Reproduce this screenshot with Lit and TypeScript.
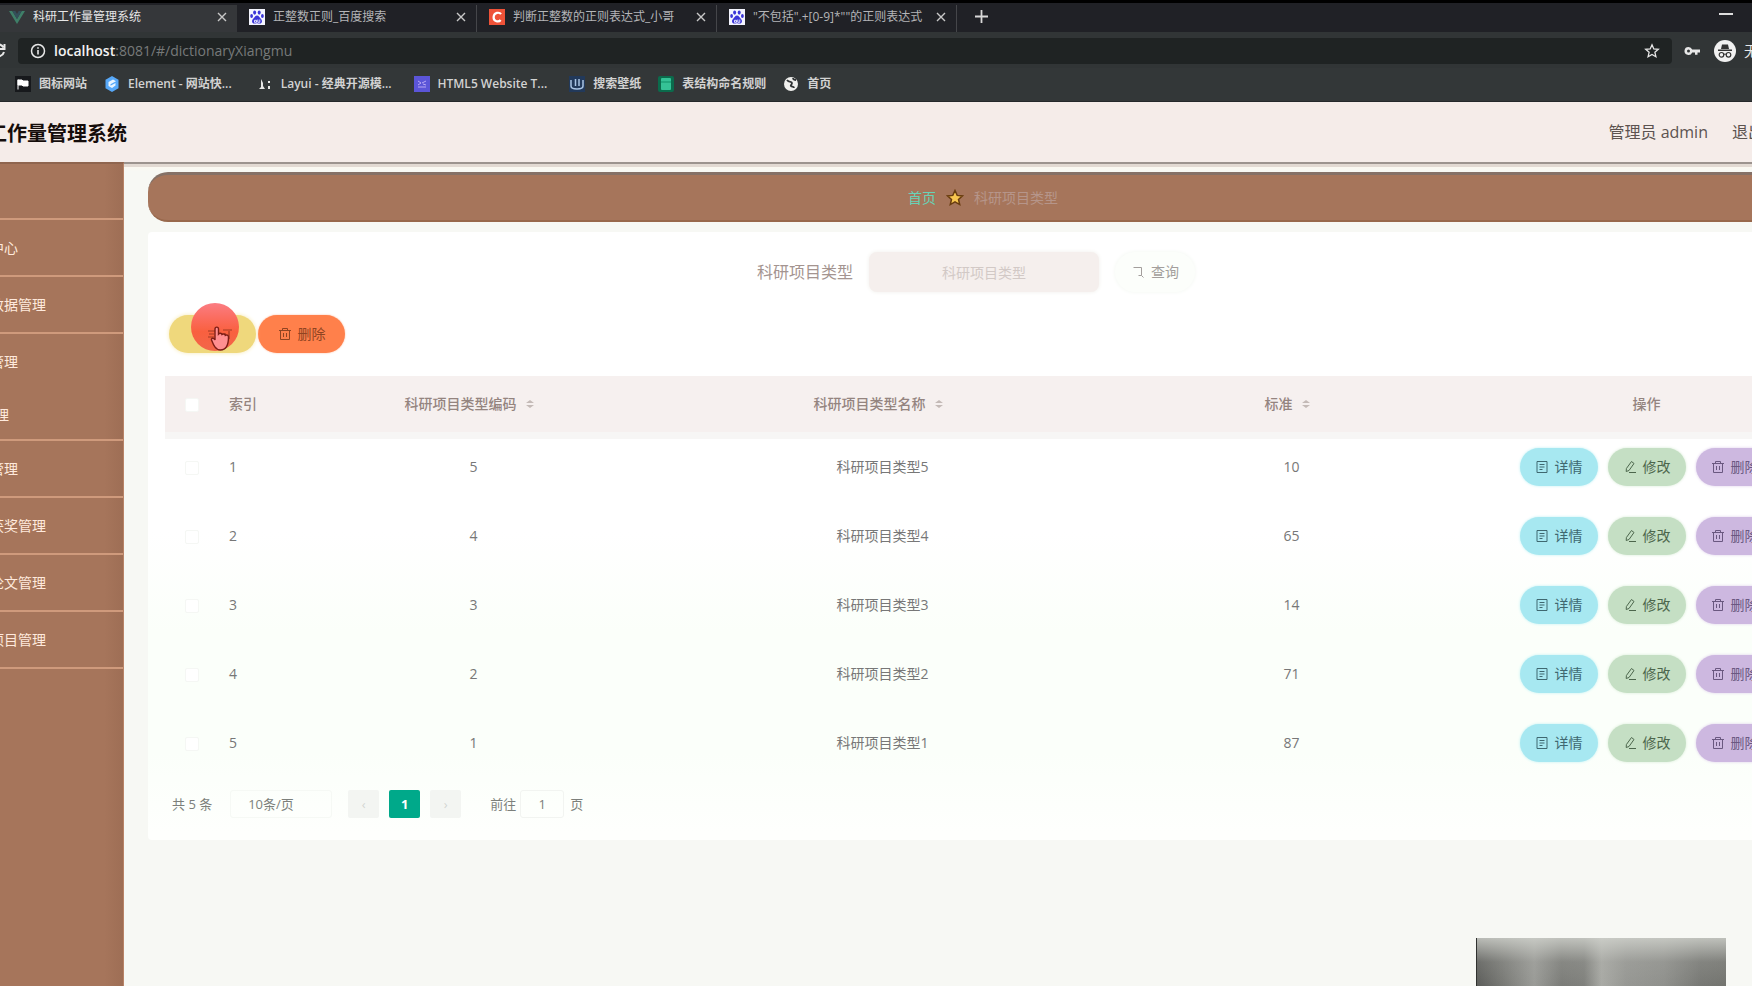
import { LitElement, html, css, svg } from "lit";
import { customElement } from "lit/decorators.js";

const baidu = svg`<svg class="fav" viewBox="0 0 16 16"><rect width="16" height="16" fill="#f4f5ff"/><g fill="#3a35d8"><ellipse cx="5.6" cy="3.6" rx="1.5" ry="2.1"/><ellipse cx="10.2" cy="3.6" rx="1.5" ry="2.1"/><ellipse cx="2.6" cy="7" rx="1.4" ry="1.9"/><ellipse cx="13.4" cy="7" rx="1.4" ry="1.9"/><path d="M8 6.6c-2 0-2.4 2-4 3.4-1.6 1.500-1.200 4.600 1.200 4.600 1.200 0 1.800-.3 2.800-.3s1.600.3 2.800.3c2.400 0 2.800-3.100 1.200-4.600C10.400 8.600 10 6.600 8 6.600z"/></g><path d="M5.500 11.300h2v2h-2zM8.800 10.500v2.800h2v-2.800" fill="none" stroke="#f4f5ff" stroke-width=".9"/></svg>`;
const vue = svg`<svg class="fav" viewBox="0 0 16 16"><path d="M0 2h3.300L8 10l4.700-8H16L8 15z" fill="#3f7f68"/><path d="M3.300 2h3L8 5l1.700-3h3L8 10z" fill="#33505a"/></svg>`;
const csdn = svg`<svg class="fav" viewBox="0 0 16 16"><rect width="16" height="16" fill="#ee5238"/><path d="M12 5.200C10.500 3 5 3 4.600 8c-.2 5 5.400 5.200 7 3" fill="none" stroke="#fff" stroke-width="2.200"/></svg>`;
const closeIcon = svg`<svg viewBox="0 0 10 10" width="10" height="10"><path d="M1 1l8 8M9 1l-8 8" stroke="currentColor" stroke-width="1.400"/></svg>`;

const TABS = [
  { title: "科研工作量管理系统", icon: vue },
  { title: "正整数正则_百度搜索", icon: baidu },
  { title: "判断正整数的正则表达式_小哥", icon: csdn },
  { title: "\"不包括\".+[0-9]*\"\"的正则表达式", icon: baidu },
];

const MARKS = [
  { cls: "", title: "图标网站", icon: svg`<svg class="fav" viewBox="0 0 16 16"><rect width="16" height="16" fill="#17191c"/><path d="M3 3.500v10M3 4h4l1 1h5v5H8L7 9H3z" fill="#fff" stroke="#fff"/></svg>` },
  { cls: "", title: "Element - 网站快...", icon: svg`<svg class="fav" viewBox="0 0 16 16"><path d="M8 0l6.500 3.800v8.400L8 16l-6.500-3.800V3.800z" fill="#57a8f8"/><path d="M4.500 6L9 3.500l3 1.700L6.500 8.300v1.500l5-2.800v2.500L8 12l-3.500-2z" fill="#e9f5ff"/></svg>` },
  { cls: "wide", title: "Layui - 经典开源模...", icon: svg`<svg class="fav" viewBox="0 0 16 16"><path d="M4 3v8l-2 2h6l-2-3V7zM11 5h2v2h-2zM11 10h2v3h-2z" fill="#e8e8e6"/></svg>` },
  { cls: "wide", title: "HTML5 Website T...", icon: svg`<svg class="fav" viewBox="0 0 16 16"><rect width="16" height="16" fill="#5b55d8"/><path d="M4 5l3 2-3 2M8 7l4-2M4 11h8M9 8l3 1" stroke="#b9a8f4" fill="none"/></svg>` },
  { cls: "wide", title: "搜索壁纸", icon: svg`<svg class="fav" viewBox="0 0 16 16"><rect width="16" height="16" fill="#22395a"/><path d="M2 4v6c0 4 12 4 12 0V4M6.500 3v7M10 3v7" stroke="#a9c4e4" stroke-width="1.500" fill="none"/></svg>` },
  { cls: "", title: "表结构命名规则", icon: svg`<svg class="fav" viewBox="0 0 16 16"><rect width="16" height="16" rx="2" fill="#0b6b4c"/><rect x="3" y="2" width="10" height="12" rx="1" fill="#35c296"/><path d="M3 6h10" stroke="#0f8f66"/></svg>` },
  { cls: "", title: "首页", icon: svg`<svg class="fav" viewBox="0 0 16 16"><circle cx="8" cy="8" r="7" fill="#f0f0ee"/><path d="M4 4c2 3 5 1 5 3s-2 2-1 3 3 0 3 2M10 2c0 2 2 2 3 2" stroke="#303335" stroke-width="1.800" fill="none"/></svg>` },
];

const MENU = [
  { text: "", cls: "" },
  { text: "中心", cls: "" },
  { text: "数据管理", cls: "" },
  { text: "管理", cls: "open" },
  { text: "管理", cls: "sub" },
  { text: "管理", cls: "" },
  { text: "获奖管理", cls: "" },
  { text: "论文管理", cls: "" },
  { text: "项目管理", cls: "" },
];

const ROWS = [
  { code: 5, std: 10 },
  { code: 4, std: 65 },
  { code: 3, std: 14 },
  { code: 2, std: 71 },
  { code: 1, std: 87 },
];

const docIcon = svg`<svg class="ico" viewBox="0 0 14 14"><path d="M2 1.500h10v11H2zM4.500 4.500h5M4.500 7h5M4.500 9.500h3" fill="none" stroke="currentColor"/></svg>`;
const editIcon = svg`<svg class="ico" viewBox="0 0 14 14"><path d="M8.500 1.500l2.500 2-5 7-2.800 1 .2-3zM6 12.500h7" fill="none" stroke="currentColor"/></svg>`;
const binIcon = svg`<svg class="ico" viewBox="0 0 14 14"><path d="M1 3.500h12M4.500 3.500v-2h5v2M2.500 3.500v9h9v-9M5.500 6v4M8.500 6v4" fill="none" stroke="currentColor"/></svg>`;
const sortIcon = svg`<svg class="sort" viewBox="0 0 10 10"><path d="M1 4l4-3 4 3zM1 6l4 3 4-3z" fill="currentColor"/></svg>`;

@customElement("app-root")
export class AppRoot extends LitElement {
  static styles = css`
    :host { display: flex; flex-direction: column; position: relative; min-height: 100vh; overflow: hidden; background: #f7f8f4; font-family: "Open Sans", "Noto Sans CJK SC", sans-serif; font-size: 14px; line-height: 20px; color: #777; }
    * { box-sizing: border-box; }
    button, input, select { font: inherit; color: inherit; border: 0; margin: 0; padding: 0; background: none; }
    button { cursor: pointer; }
    a { text-decoration: none; color: inherit; }

    .tabs { display: flex; align-items: stretch; height: 32px; padding-top: 2px; border-top: 3px solid #000; margin-left: -3px; background: #202126; font-size: 12px; color: #b4b5b8; }
    .tab { display: flex; align-items: center; gap: 8px; width: 240px; padding: 0 10px 4px 12px; }
    .tab + .tab { border-right: 1px solid #45464a; }
    .tab.active { background: #35373a; color: #e6e6e6; }
    .fav { width: 16px; height: 16px; flex: none; }
    .title { flex: 1; overflow: hidden; white-space: nowrap; }
    .close { display: flex; flex: none; color: #c8c8c8; }
    .plus { display: flex; align-items: center; padding: 0 16px 4px 18px; color: #d8d8d8; }
    .min { margin: 8px 19px 0 auto; width: 14px; height: 2px; background: #ddd; }

    .address { display: flex; align-items: center; gap: 12px; height: 36px; padding-top: 2px; background: #313536; color: #e8e8e8; }
    .reload { display: flex; margin-left: -10px; }
    .field { display: flex; align-items: center; gap: 8px; flex: 1; height: 26px; padding: 0 12px; border-radius: 4px; background: #1f2323; }
    .url { flex: 1; font-size: 14px; color: #777a7a; }
    .url b { font-weight: 600; color: #f2f2f2; }
    .who { display: flex; align-items: center; gap: 8px; margin-left: 2px; font-size: 14px; width: 38px; white-space: nowrap; }
    .guest { flex: none; width: 22px; height: 22px; }
    .marks { display: flex; align-items: center; gap: 17px; height: 34px; padding: 0 15px 2px; background: #333738; border-bottom: 1px solid #25282a; font-size: 12px; font-weight: 600; color: #d2d2d2; }
    .mark { display: flex; align-items: center; gap: 8px; white-space: nowrap; }
    .wide { margin-left: 8px; }
    .wide + .wide { margin-left: 5px; }

    .head { display: flex; align-items: center; height: 60px; padding-top: 4px; background: #f5ece9; color: #5c5350; font-size: 16px; }
    h1 { flex: 1; margin: 0 0 0 -13px; font-size: 20px; line-height: 28px; color: #150d0b; font-weight: 700; }
    .head nav { display: flex; gap: 24px; margin-right: -12px; padding-bottom: 4px; white-space: nowrap; }

    .body { display: grid; grid-template-columns: 124px minmax(0, 1fr); flex: 1; }
    .side { background: linear-gradient(90deg, #a6755b 85%, #9e6e55); border-top: 2px solid #8f654f; border-right: 1px solid #b98468; overflow: hidden; }
    .side ul { list-style: none; margin: 0; padding: 0; }
    .item { display: flex; align-items: center; height: 57px; border-bottom: 2px solid #cf9a7c; color: #ffeadd; }
    .item:first-child { height: 56px; }
    .item a { margin-left: -10px; white-space: nowrap; }
    .item.open { border-bottom-color: transparent; }
    .item.sub { height: 50px; }
    .item.sub a { margin-left: -19px; }

    main { min-width: 0; padding: 6px 0 60px 24px; border-top: 2px solid #9c938e; background: linear-gradient(#e2d9d2 3px, #faf8f1 3px, #f7f8f4 8px); }
    .crumbs { display: flex; align-items: center; justify-content: center; gap: 10px; height: 50px; margin: 2px -62px 0 0; padding-left: 4px; border-radius: 20px; border-top: 3px solid #857167; border-bottom: 2px solid #98684c; background: #a6755b; color: #b6958a; }
    .crumbs .home { color: #68d3b8; }
    .card { margin: 10px -62px 0 0; padding: 16px 17px 22px; border-radius: 4px; background: linear-gradient(#fff 300px, #fbfffa 400px, #fbfffa 520px, #fefffd 600px); }
    .search { display: flex; align-items: center; justify-content: center; gap: 16px; height: 48px; margin-right: 10px; }
    .search label { font-size: 16px; color: #a49490; }
    .search input { width: 230px; height: 40px; border-radius: 8px; background: #f5efed; box-shadow: 0 0 4px #f0efeb; text-align: center; }
    .search input::placeholder { color: #d2c9c6; }
    .btn { display: inline-flex; align-items: center; justify-content: center; gap: 6px; white-space: nowrap; }
    .find { width: 80px; height: 40px; border-radius: 20px; background: #fcfefb; box-shadow: 0 0 4px #f3f7f1; color: #a39e9c; }
    .ico { width: 14px; height: 14px; flex: none; }
    .tools { display: flex; gap: 2px; margin: 19px 0 23px 4px; }
    .tools .btn { width: 87px; height: 38px; border-radius: 19px; }
    .add { position: relative; background: #efd87c; box-shadow: 0 0 4px #f6e9b4; }
    .del { background: #ff804b; color: #8f4422; box-shadow: 0 0 2px #ffb493; }
    .touch { position: absolute; left: 22px; top: -12px; width: 48px; height: 50px; }

    table { width: 100%; border-collapse: collapse; table-layout: fixed; }
    .c0 { width: 54px; } .c1 { width: 50px; } .c5 { width: 301px; }
    th { height: 56px; padding: 0; background: #f6f0ef; color: #94847f; font-weight: 500; text-align: center; }
    td { height: 69px; padding: 0; text-align: center; }
    tbody tr:first-child td { background: linear-gradient(#f7f6f5 7px, transparent 7px); }
    .idx { text-align: left; padding-left: 10px; }
    .sort { width: 10px; height: 10px; margin: 0 8px; color: #c4bab7; }
    input[type="checkbox"] { appearance: none; width: 14px; height: 14px; border: 1px solid #f5f7f4; border-radius: 2px; background: #fff; vertical-align: middle; }
    .acts { display: flex; justify-content: center; gap: 10px; }
    .acts .btn { width: 78px; height: 38px; border-radius: 19px; }
    .acts .view { background: #a7e8f1; box-shadow: 0 0 3px #bdf0f4; color: #3f6870; }
    .acts .edit { background: #c5dfc4; box-shadow: 0 0 3px #d5ead3; color: #4c664c; }
    .acts .kill { background: #cdb8e0; box-shadow: 0 0 3px #dccbea; color: #6a5880; }

    .pager { display: flex; align-items: center; height: 28px; margin: 13px 0 0 7px; font-size: 13px; color: #7c7f7b; white-space: nowrap; }
    .pager select { appearance: none; width: 102px; height: 28px; margin: 0 16px 0 18px; padding-left: 17px; border: 1px solid #f6f9f5; border-radius: 3px; font-size: 13px; }
    .pg { display: flex; gap: 10px; margin-right: 29px; }
    .pg button { width: 31px; height: 28px; border-radius: 2px; background: #f3f5f2; color: #d3d6d3; }
    .pg .on { background: #00a98a; color: #fff; font-weight: 700; }
    .pager input { width: 44px; height: 28px; margin: 0 6px 0 4px; border: 1px solid #f2f4f1; border-radius: 3px; text-align: center; font-size: 13px; }

    .haze { position: absolute; right: 26px; bottom: 0; width: 250px; height: 48px; background: linear-gradient(rgba(210,212,206,.8), rgba(180,181,176,.2) 50%, transparent), linear-gradient(90deg, #5c5d5a, #777874 10%, #9a9b97 23%, #7b7c78 34%, #7f807c 43%, #a9aaa5 50%, #969793 60%, #8f908c 75%, #777874 90%, #73746f); border-left: 1px solid #30312f; }
  `;

  render() {
    return html`
      <div class="tabs">
        ${TABS.map((t, i) => html`<div class="tab ${i === 0 ? "active" : ""}">${t.icon}<span class="title">${t.title}</span><button class="close" aria-label="关闭">${closeIcon}</button></div>`)}
        <button class="plus" aria-label="新标签页"><svg width="13" height="13" viewBox="0 0 13 13"><path d="M6.500 0v13M0 6.500h13" stroke="currentColor" stroke-width="1.800"/></svg></button>
        <button class="min" aria-label="最小化"></button>
      </div>
      <div class="address">
        <button class="reload" aria-label="刷新"><svg width="16" height="16" viewBox="0 0 16 16"><path d="M13.500 4.500A6 6 0 1 0 14 9M14.500 1v5h-5" fill="none" stroke="currentColor" stroke-width="2"/></svg></button>
        <div class="field">
          <svg width="16" height="16" viewBox="0 0 16 16"><circle cx="8" cy="8" r="6.500" fill="none" stroke="currentColor" stroke-width="1.500"/><path d="M8 7v4.500M8 4.300v1.500" stroke="currentColor" stroke-width="1.600"/></svg>
          <span class="url"><b>localhost</b>:8081/#/dictionaryXiangmu</span>
          <svg width="16" height="16" viewBox="0 0 16 16"><path d="M8 1.800l1.800 4.100 4.500.4-3.400 3 1 4.400L8 11.400l-3.900 2.300 1-4.400-3.400-3 4.500-.4z" fill="none" stroke="currentColor" stroke-width="1.300"/></svg>
        </div>
        <svg width="16" height="16" viewBox="0 0 16 16"><path d="M4.500 4a4 4 0 1 0 3.700 5.500H11v2.300h2.500V9.500H16v-3H8.200A4 4 0 0 0 4.500 4zm0 2.500a1.500 1.500 0 1 1 0 3 1.500 1.500 0 0 1 0-3z" fill="currentColor"/></svg>
        <div class="who"><svg class="guest" viewBox="0 0 22 22"><circle cx="11" cy="11" r="11" fill="#f1f1f1"/><path d="M8 4.500h6l1 4.500H7zM4 9.500h14v1.500H4z" fill="#333"/><path d="M9.500 14.500q1.500-1 3 0" fill="none" stroke="#333"/><circle cx="7.500" cy="14.800" r="2.300" fill="none" stroke="#333" stroke-width="1.200"/><circle cx="14.500" cy="14.800" r="2.300" fill="none" stroke="#333" stroke-width="1.200"/></svg><span>无</span></div>
      </div>
      <nav class="marks">${MARKS.map((m) => html`<a class="mark ${m.cls}" href="#">${m.icon}<span>${m.title}</span></a>`)}</nav>

      <header class="head">
        <h1>工作量管理系统</h1>
        <nav><span>管理员 admin</span><a href="#">退出</a></nav>
      </header>
      <div class="body">
        <aside class="side"><ul>${MENU.map((m) => html`<li class="item ${m.cls}"><a href="#">${m.text}</a></li>`)}</ul></aside>
        <main>
          <nav class="crumbs"><a class="home" href="#">首页</a>
            <svg width="18" height="18" viewBox="0 0 18 18"><path d="M9 1.500l2.200 4.900 5.300.5-4 3.500 1.200 5.200L9 12.900l-4.700 2.700 1.200-5.200-4-3.500 5.300-.5z" fill="#f8c650" stroke="#6a3d10" stroke-width="1.500"/></svg>
            <span>科研项目类型</span></nav>
          <section class="card">
            <form class="search">
              <label for="kind">科研项目类型</label>
              <input id="kind" type="text" placeholder="科研项目类型">
              <button type="button" class="btn find"><svg class="ico" viewBox="0 0 14 14"><path d="M2.500 2.500h8v8h-3M10.500 10.500l2 2" fill="none" stroke="currentColor"/></svg>查询</button>
            </form>
            <div class="tools">
              <button class="btn add" aria-label="新增">
                <svg class="touch" viewBox="0 0 48 50"><defs><linearGradient id="g" x1="0" y1="0" x2="0" y2="1"><stop offset="0" stop-color="#fb7d83"/><stop offset=".3" stop-color="#fb6d60"/><stop offset=".6" stop-color="#f9603f"/><stop offset="1" stop-color="#f2664a"/></linearGradient></defs><circle cx="24" cy="24" r="24" fill="url(#g)"/><path d="M17 28h7M18 31h5M17 34h6M32 27h9M34 30v7M38 28v8" stroke="#a13a22" stroke-width="1.200"/><path d="M24 37v-11c0-2.500 3.500-2.500 3.500 0v5c1-1.200 3-1 3.500.5 1-1 3-.6 3.300.8 1.200-.8 3.200 0 3.200 1.700 0 7-2 13-8 13-5 0-7-5-9-10-.6-2 2.200-2.500 3.500 0z" fill="#ff8f91" stroke="#7d1d16" stroke-width="1.400"/></svg>
              </button>
              <button class="btn del">${binIcon}删除</button>
            </div>
            <table>
              <colgroup><col class="c0"><col class="c1"><col><col><col><col class="c5"></colgroup>
              <thead><tr>
                <th><input type="checkbox" aria-label="全选"></th><th class="idx">索引</th>
                <th>科研项目类型编码${sortIcon}</th><th>科研项目类型名称${sortIcon}</th><th>标准${sortIcon}</th><th>操作</th>
              </tr></thead>
              <tbody>${ROWS.map((r, i) => html`<tr>
                <td><input type="checkbox" aria-label="选择"></td><td class="idx">${i + 1}</td>
                <td>${r.code}</td><td>科研项目类型${r.code}</td><td>${r.std}</td>
                <td><div class="acts"><button class="btn view">${docIcon}详情</button><button class="btn edit">${editIcon}修改</button><button class="btn kill">${binIcon}删除</button></div></td>
              </tr>`)}</tbody>
            </table>
            <div class="pager">
              <span>共 5 条</span>
              <select aria-label="每页条数"><option>10条/页</option></select>
              <div class="pg"><button aria-label="上一页">‹</button><button class="on">1</button><button aria-label="下一页">›</button></div>
              <label for="jump">前往</label><input id="jump" type="text" value="1"><span>页</span>
            </div>
          </section>
        </main>
      </div>
      <div class="haze"></div>
    `;
  }
}
